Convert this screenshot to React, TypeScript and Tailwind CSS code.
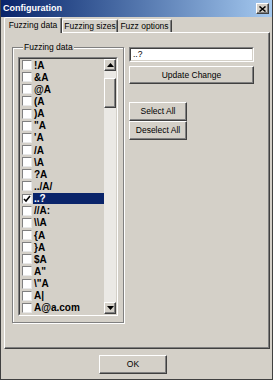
import * as React from "react";

const ITEMS = [
  "!A",
  "&A",
  "@A",
  "(A",
  ")A",
  '"A',
  "'A",
  "/A",
  "\\A",
  "?A",
  "../A/",
  "..?",
  "//A:",
  "\\\\A",
  "{A",
  "}A",
  "$A",
  'A"',
  '\\"A',
  "A|",
  "A@a.com",
];

const SELECTED = 11;

// classic raised 3D edge
const raised =
  "border border-t-white border-l-white border-r-[#404040] border-b-[#404040] shadow-[inset_-1px_-1px_0_#808080] bg-[#d4d0c8]";

function Button({ className, children }: { className?: string; children: React.ReactNode }) {
  return (
    <div className={`${raised} flex items-center justify-center text-[8.5px] leading-none ${className ?? ""}`}>
      {children}
    </div>
  );
}

function Arrow({ up }: { up?: boolean }) {
  return (
    <svg width="7" height="4" viewBox="0 0 7 4">
      <path d={up ? "M3.5 0L7 4H0Z" : "M0 0H7L3.5 4Z"} fill="#000" />
    </svg>
  );
}

function CheckBox({ checked }: { checked?: boolean }) {
  return (
    <div className="flex h-[10px] w-[10px] shrink-0 items-center justify-center border border-t-[#808080] border-l-[#808080] border-r-[#e8e8e8] border-b-[#e8e8e8] bg-white">
      {checked ? (
        <svg width="8" height="8" viewBox="0 0 8 8">
          <path d="M1 4l2 2 4-5" stroke="#000" strokeWidth="1.6" fill="none" />
        </svg>
      ) : null}
    </div>
  );
}

function ListBox() {
  return (
    <div className="flex h-[259px] w-[100px] border border-t-[#808080] border-l-[#808080] border-r-white border-b-white">
      <div className="flex min-w-0 flex-1 overflow-hidden border border-t-[#404040] border-l-[#404040] border-r-[#d4d0c8] border-b-[#d4d0c8]">
        <div className="min-w-0 flex-1 overflow-hidden">
          {ITEMS.map((item, i) => (
            <div key={item + i} className="flex h-[12.15px] items-center pl-[2px]">
              <CheckBox checked={i === SELECTED} />
              <div
                className={`ml-[1px] h-[11px] flex-1 whitespace-nowrap px-[1px] text-[10px] font-bold leading-[11px] ${
                  i === SELECTED ? "bg-[#0a246a] text-white" : ""
                }`}
              >
                {item}
              </div>
            </div>
          ))}
        </div>
        {/* scrollbar */}
        <div className="flex w-[12px] shrink-0 flex-col bg-[#ebe9e5]">
          <div className={`${raised} flex h-[12px] items-center justify-center`}>
            <Arrow up />
          </div>
          <div className="h-[7px]" />
          <div className={`${raised} h-[30px]`} />
          <div className="flex-1" />
          <div className={`${raised} flex h-[12px] items-center justify-center`}>
            <Arrow />
          </div>
        </div>
      </div>
    </div>
  );
}

export default function App() {
  return (
    <div className="flex h-[380px] w-[273px] flex-col border-x border-b border-[#404040] bg-[#d4d0c8] font-['Liberation_Sans',Arial,sans-serif] text-black">
      {/* title bar */}
      <div className="flex h-[17px] shrink-0 items-center bg-linear-to-r from-[#0a246a] to-[#a6caf0] pl-[2px] pr-[3px]">
        <span className="flex-1 text-[9px] font-bold text-white">Configuration</span>
        <div className={`${raised} flex h-[11px] w-[13px] items-center justify-center`}>
          <svg width="7" height="6" viewBox="0 0 7 6">
            <path d="M0.5 0.5l6 5M6.5 0.5l-6 5" stroke="#000" strokeWidth="1.5" />
          </svg>
        </div>
      </div>

      <div className="flex flex-1 flex-col pl-[3px] pr-[2px]">
        {/* tabs */}
        <div className="flex h-[15px] items-end">
          <div className="relative z-10 -mb-px flex h-[16px] w-[58px] items-center justify-center rounded-t-[2px] border-l border-t border-r border-t-white border-l-white border-r-[#404040] bg-[#d4d0c8] text-[8.5px] shadow-[inset_-1px_0_0_#808080]">
            Fuzzing data
          </div>
          <div className="flex h-[13px] w-[56px] items-center justify-center rounded-t-[2px] border-l border-t border-r border-t-white border-l-white border-r-[#404040] text-[8.5px] shadow-[inset_-1px_0_0_#808080]">
            Fuzzing sizes
          </div>
          <div className="flex h-[13px] w-[54px] items-center justify-center rounded-t-[2px] border-t border-r border-t-white border-r-[#404040] text-[8.5px] shadow-[inset_-1px_0_0_#808080]">
            Fuzz options
          </div>
        </div>

        {/* tab panel */}
        <div className="flex h-[317px] items-start border border-t-white border-l-white border-r-[#404040] border-b-[#404040] pl-[7px] pt-[9px] shadow-[inset_-1px_-1px_0_#808080]">
          <fieldset className="w-[112px] border border-[#808080] pb-[6px] pl-[5px] pt-[5px] shadow-[inset_1px_1px_0_#fff,1px_1px_0_#fff]">
            <legend className="ml-[5px] bg-[#d4d0c8] px-[1px] text-[8.5px] leading-[10px]">Fuzzing data</legend>
            <ListBox />
          </fieldset>

          <div className="ml-[5px] mt-[5px] flex flex-col">
            <div className="flex h-[15px] w-[125px] items-center border border-t-[#808080] border-l-[#808080] border-r-white border-b-white">
              <div className="flex h-full flex-1 items-center border border-t-[#404040] border-l-[#404040] border-r-[#d4d0c8] border-b-[#d4d0c8] bg-white pl-[2px] text-[8.5px]">
                ..?
              </div>
            </div>
            <Button className="mt-[4px] h-[18px] w-[125px]">Update Change</Button>
            <Button className="mt-[18px] h-[19px] w-[58px]">Select All</Button>
            <Button className="h-[19px] w-[58px]">Deselect All</Button>
          </div>
        </div>

        {/* footer */}
        <div className="flex pl-[95px] pt-[6px]">
          <Button className="h-[19px] w-[68px]">OK</Button>
        </div>
      </div>
    </div>
  );
}
